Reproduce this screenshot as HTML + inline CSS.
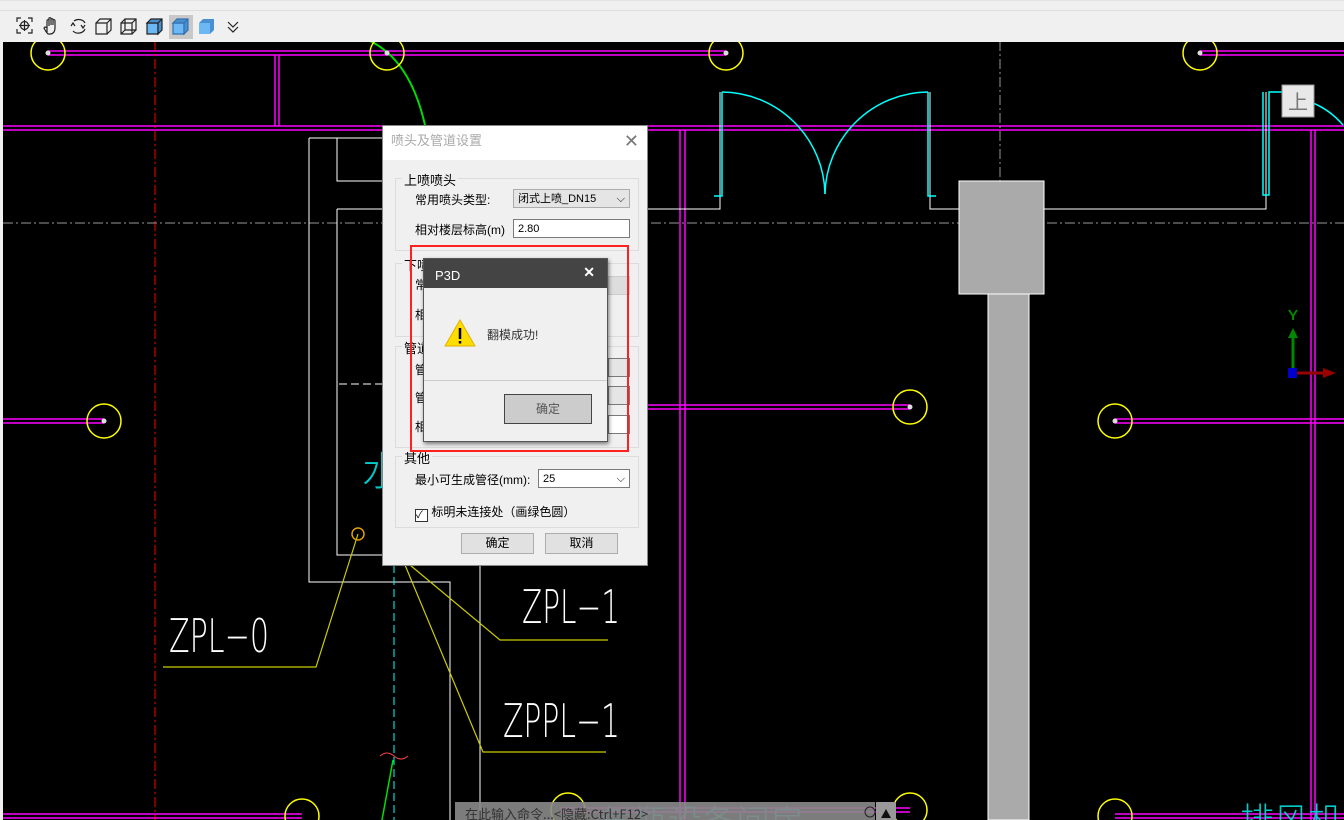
<!DOCTYPE html>
<html><head><meta charset="utf-8"><style>
body{margin:0;width:1344px;height:820px;overflow:hidden;background:#000;font-family:"Liberation Sans","Noto Sans CJK SC",sans-serif;position:relative}
.tb{position:absolute;left:0;top:0;width:1344px;height:41px;background:#f0f0f0;border-top:1px solid #e3e3e3}
.tb .line{position:absolute;left:0;top:9px;width:1344px;height:1px;background:#ddd}
.dlg{position:absolute;left:382px;top:125px;width:264px;height:439px;background:#f0f0f0;border:1px solid #888;font-size:12px;color:#000}
.dt{height:34px;background:#fff;color:#aaa;font-size:13px;line-height:30px;padding-left:8px;position:relative}
.grp{position:absolute;left:12px;border:1px solid #dcdcdc;width:242px}
.gl{position:absolute;left:6px;top:-9px;background:#f0f0f0;padding:0 2px;font-size:13px}
.lab{position:absolute;font-size:12px}
.inp{position:absolute;background:#fff;border:1px solid #7a7a7a;height:19px;font-size:11px;line-height:19px;padding-left:4px;box-sizing:border-box}
.cmb{background:#e5e5e5;border-color:#acacac}
.btn{position:absolute;background:#e1e1e1;border:1px solid #adadad;text-align:center;font-size:12px;line-height:19px;height:21px;box-sizing:border-box}
.mb{position:absolute;left:423px;top:258px;width:183px;height:182px;background:#f0f0f0;border:1px solid #555;box-shadow:1px 2px 4px rgba(0,0,0,.5)}
.mt{height:29px;background:#444;color:#fff;font-size:13px;line-height:33px;padding-left:11px;position:relative}
</style></head><body>
<svg width="1344" height="820" style="position:absolute;left:0;top:0">
<rect x="0" y="0" width="3" height="820" fill="#f0f0f0"/>
<g stroke="#ff00ff" stroke-width="1.5" fill="none">
<line x1="48" y1="51" x2="726" y2="51"/><line x1="48" y1="55" x2="726" y2="55"/>
<line x1="1200" y1="51" x2="1344" y2="51"/><line x1="1200" y1="55" x2="1344" y2="55"/>
<line x1="3" y1="126" x2="1344" y2="126"/><line x1="3" y1="130" x2="1344" y2="130"/>
<line x1="275" y1="55" x2="275" y2="126"/><line x1="279" y1="55" x2="279" y2="126"/>
<line x1="680" y1="130" x2="680" y2="820"/><line x1="685" y1="130" x2="685" y2="820"/>
<line x1="1311" y1="130" x2="1311" y2="820"/><line x1="1315" y1="130" x2="1315" y2="820"/>
<line x1="640" y1="405" x2="910" y2="405"/><line x1="640" y1="409" x2="910" y2="409"/>
<line x1="3" y1="419" x2="104" y2="419"/><line x1="3" y1="423" x2="104" y2="423"/>
<line x1="1115" y1="419" x2="1344" y2="419"/><line x1="1115" y1="423" x2="1344" y2="423"/>
<line x1="3" y1="814" x2="302" y2="814"/><line x1="3" y1="818" x2="302" y2="818"/>
<line x1="560" y1="808" x2="910" y2="808"/><line x1="560" y1="812" x2="910" y2="812"/>
<line x1="1115" y1="814" x2="1344" y2="814"/><line x1="1115" y1="818" x2="1344" y2="818"/>
</g>
<g stroke="#ff0000" stroke-width="1" stroke-dasharray="10,3,2,3"><line x1="155" y1="41" x2="155" y2="820"/></g>
<g stroke="#999" stroke-width="1" stroke-dasharray="10,3,2,3"><line x1="3" y1="223" x2="1344" y2="223"/><line x1="1000" y1="41" x2="1000" y2="181"/></g>
<g stroke="#fff" stroke-width="1" fill="none">
<path d="M309 138H382M309 138V582H450V820M337 138V181H382M337 209H382M337 209V555H382"/>
<path d="M480 565V820M720 92V209H337M930 92V209H1266V92"/>
<rect x="959" y="181" width="85" height="113" fill="#aaa"/>
</g>
<rect x="988" y="294" width="41" height="526" fill="#aaa" stroke="#fff"/>
<g stroke="#00ffff" stroke-width="1.5" fill="none">
<path d="M722 92V196H714"/><path d="M928 92V196H936"/>
<path d="M722 92A104 104 0 0 1 825 194"/><path d="M928 92A104 104 0 0 0 825 194"/>
<path d="M1263 92V195H1269V92H1282"/><path d="M1313 103Q1330 110 1343 125"/>
<line x1="394" y1="565" x2="394" y2="820" stroke-dasharray="8,4" stroke-width="1"/>
</g>
<path d="M370 41Q410 60 425 125" stroke="#00dd00" stroke-width="2" fill="none"/>
<path d="M393 760L382 820" stroke="#00dd00" stroke-width="1.5"/>
<path d="M380 756q7-6 14 0t14 0" stroke="#f44" fill="none"/>
<path d="M339 384H382" stroke="#fff" stroke-dasharray="8,4"/>
<g stroke="#cccc00" stroke-width="1.2" fill="none">
<path d="M163 667H316L358 534"/><path d="M410 565L500 640H608"/><path d="M405 565L483 752H606"/>
</g>
<circle cx="358" cy="534" r="6" stroke="#e0a000" stroke-width="1.5" fill="none"/>
<g stroke="#ffff00" stroke-width="1.5" fill="none">
<circle cx="48" cy="53" r="17"/><circle cx="387" cy="53" r="17"/><circle cx="726" cy="53" r="17"/><circle cx="1200" cy="53" r="17"/>
<circle cx="104" cy="421" r="17"/><circle cx="910" cy="407" r="17"/><circle cx="1115" cy="421" r="17"/>
<circle cx="302" cy="816" r="17"/><circle cx="910" cy="810" r="17"/><circle cx="1115" cy="816" r="17"/><circle cx="568" cy="810" r="17"/>
</g>
<g fill="#ddd"><circle cx="48" cy="53" r="2.5"/><circle cx="387" cy="53" r="2.5"/><circle cx="726" cy="53" r="2.5"/><circle cx="1200" cy="53" r="2.5"/><circle cx="104" cy="421" r="2.5"/><circle cx="910" cy="407" r="2.5"/><circle cx="1115" cy="421" r="2.5"/></g>
<g fill="#fff" font-family="DejaVu Sans" font-weight="200" font-size="46">
<text x="169" y="652" textLength="100" lengthAdjust="spacingAndGlyphs">ZPL−0</text>
<text x="522" y="623" textLength="98" lengthAdjust="spacingAndGlyphs">ZPL−1</text>
<text x="503" y="737" textLength="117" lengthAdjust="spacingAndGlyphs">ZPPL−1</text>
</g>
<text x="362" y="485" fill="#00cccc" font-size="40" font-weight="200" font-family="Noto Sans CJK SC">水</text>
<text x="1240" y="832" fill="#00cccc" font-size="34" font-weight="200" font-family="Noto Sans CJK SC">排风机</text>
<text x="600" y="834" fill="#00aaaa" font-size="34" font-weight="200" font-family="Noto Sans CJK SC">气瓶设备间房</text>
<rect x="1282" y="85" width="32" height="32" fill="#e8e8e8" stroke="#999"/>
<text x="1288" y="109" font-size="20" fill="#777" font-family="Noto Sans CJK SC">上</text>
<path d="M1293 372V332" stroke="#080" stroke-width="3"/><path d="M1288 338L1293 328L1298 338Z" fill="#080"/>
<path d="M1289 310L1293 316L1297 310M1293 316V320" stroke="#080" stroke-width="2" fill="none"/>
<path d="M1296 373H1325" stroke="#900" stroke-width="3"/><path d="M1323 368L1336 373L1323 378Z" fill="#900"/>
<rect x="1288" y="368" width="9" height="10" fill="#00c"/>
<rect x="455" y="802" width="420" height="18" fill="#8a8a8a" opacity=".9"/>
<text x="465" y="819" font-size="13" fill="#333" font-family="Noto Sans CJK SC">在此输入命令...&lt;隐藏:Ctrl+F12&gt;</text>
<rect x="876" y="802" width="20" height="18" fill="#999"/><path d="M881 818L886 809L891 818Z" fill="#111"/>
<circle cx="870" cy="812" r="5" stroke="#222" fill="none"/>
</svg>
<div class="tb"><div class="line"></div>
<svg width="260" height="41" style="position:absolute;left:0;top:0" fill="none" stroke="#222" stroke-width="1.2">
<g transform="translate(17,17)"><path d="M0 4V0H4M11 0H15V4M15 11V15H11M4 15H0V11"/><circle cx="7.5" cy="7.5" r="4"/><path d="M7.5 2V13M2 7.5H13"/></g>
<g transform="translate(44,16)"><path d="M3 16V7M3 7V4Q3 2 5 3V9M5 3V1Q7 0 7 2V8M7 2Q9 1 9 3V8M9 3Q11 2 11 4V11Q11 16 7 17H4Q2 15 0 11Q1 9 3 11"/></g>
<g transform="translate(69,16)"><path d="M5 4A7 6 0 0 1 16 6M16 12A7 6 0 0 1 4 14M2 9L4 6L6 9M16 8L14 11L12 8"/></g>
<g transform="translate(96,18)"><path d="M0 4H11V15H0ZM0 4L4 0H15V11L11 15M11 4L15 0"/></g>
<g transform="translate(121,18)"><path d="M0 4H11V15H0ZM4 0H15V11H4ZM0 4L4 0M11 4L15 0M11 15L15 11M0 15L4 11"/></g>
<g transform="translate(147,18)"><path d="M0 4H11V15H0Z" fill="#6bb8f5"/><path d="M0 4L4 0H15V11L11 15V4ZM11 4L15 0" fill="#4a90d0"/></g>
<rect x="169" y="14" width="24" height="24" fill="#c8c8c8" stroke="none"/>
<g transform="translate(173,18)" stroke="#3070b0"><path d="M0 4H11V15H0Z" fill="#6bb8f5"/><path d="M0 4L4 0H15V11L11 15V4ZM11 4L15 0" fill="#4a90d0"/></g>
<g transform="translate(199,18)" stroke="none"><path d="M0 4H11V15H0Z" fill="#6bb8f5"/><path d="M0 4L4 0H15V11L11 15V4Z" fill="#4a90d0"/></g>
<path d="M228 21L233 26L238 21M228 26L233 31L238 26"/>
</svg></div>

<div class="dlg">
<div class="dt">喷头及管道设置<span style="position:absolute;right:8px;top:0;font-size:18px;color:#777">✕</span></div>
<div class="grp" style="top:52px;height:71px"><span class="gl">上喷喷头</span></div>
<span class="lab" style="left:32px;top:65px">常用喷头类型:</span>
<div class="inp cmb" style="left:130px;top:63px;width:117px">闭式上喷_DN15<span style="float:right;margin-right:4px">⌵</span></div>
<span class="lab" style="left:32px;top:95px">相对楼层标高(m)</span>
<div class="inp" style="left:130px;top:93px;width:117px">2.80</div>
<div class="grp" style="top:137px;height:72px"><span class="gl">下喷喷头</span></div>
<div class="grp" style="top:220px;height:100px"><span class="gl">管道</span></div>
<span class="lab" style="left:32px;top:150px">常</span><span class="lab" style="left:32px;top:180px">相</span>
<span class="lab" style="left:32px;top:235px">管</span><span class="lab" style="left:32px;top:263px">管</span><span class="lab" style="left:32px;top:292px">相</span>
<div class="inp" style="left:225px;top:150px;width:22px;background:#ddd;border-color:#ccc"></div>
<div class="inp" style="left:225px;top:232px;width:22px;background:#e5e5e5"></div>
<div class="inp" style="left:225px;top:260px;width:22px;background:#e5e5e5"></div>
<div class="inp" style="left:225px;top:289px;width:22px"></div>
<div class="grp" style="top:330px;height:70px"><span class="gl">其他</span></div>
<span class="lab" style="left:32px;top:345px">最小可生成管径(mm):</span>
<div class="inp" style="left:155px;top:343px;width:92px">25<span style="float:right;margin-right:4px">⌵</span></div>
<span class="lab" style="left:32px;top:377px"><span style="display:inline-block;width:11px;height:11px;border:1px solid #333;background:#fff;font-size:10px;line-height:11px;vertical-align:-2px">✓</span> 标明未连接处（画绿色圆）</span>
<div class="btn" style="left:78px;top:407px;width:73px">确定</div>
<div class="btn" style="left:162px;top:407px;width:73px">取消</div>
</div>

<div style="position:absolute;left:410px;top:245px;width:215px;height:203px;border:2px solid #ff2020"></div>
<div class="mb">
<div class="mt">P3D<span style="position:absolute;right:12px;top:-3px;font-size:14px;font-weight:bold">✕</span></div>
<svg width="32" height="28" style="position:absolute;left:20px;top:60px"><path d="M16 1L31 27H1Z" fill="#ffdd00" stroke="#e0b000"/><path d="M16 9V20" stroke="#000" stroke-width="2.5"/><rect x="14.8" y="22" width="2.5" height="2.5" fill="#000"/></svg>
<span style="position:absolute;left:63px;top:67px;font-size:12px;color:#333">翻模成功!</span>
<div style="position:absolute;left:0;top:121px;width:183px;height:1px;background:#ccc"></div>
<div class="btn" style="left:80px;top:135px;width:88px;height:30px;line-height:28px;background:#ccc;border-color:#444;color:#555">确定</div>
</div>
</body></html>
